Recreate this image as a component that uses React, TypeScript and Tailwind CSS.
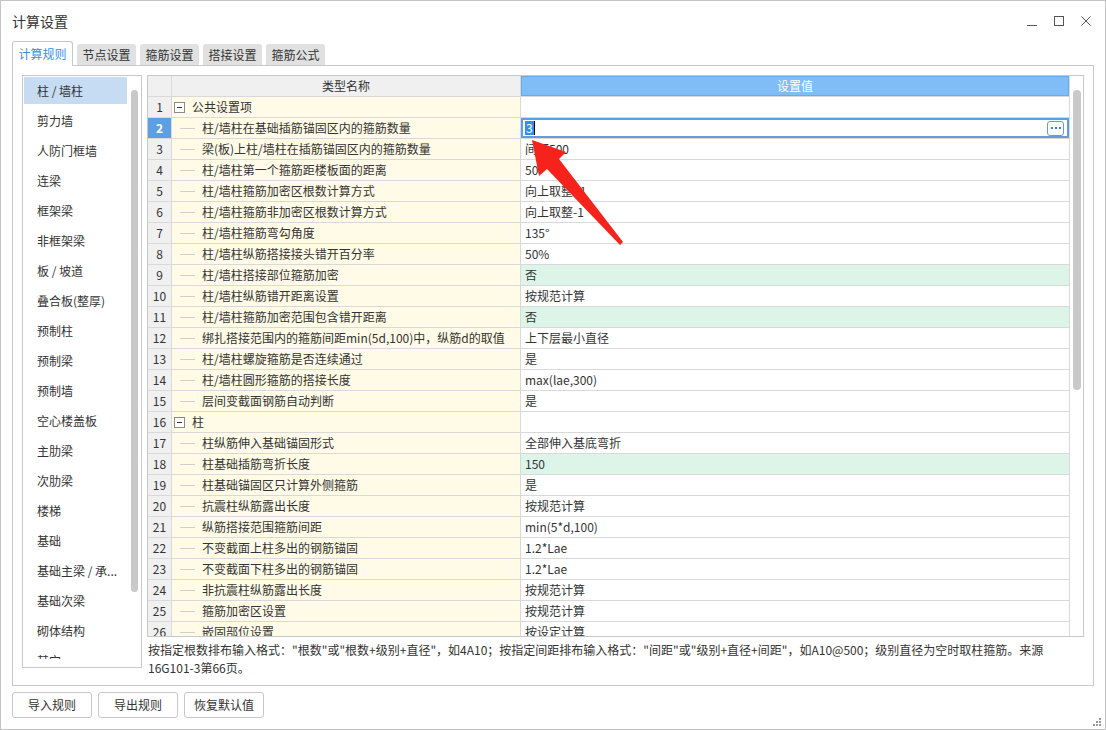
import React from "react";

type Row = {
  n: number;
  name: string;
  value?: string;
  group?: boolean;
  green?: boolean;
  selected?: boolean;
};

const rows: Row[] = [
  { n: 1, name: "公共设置项", group: true },
  { n: 2, name: "柱/墙柱在基础插筋锚固区内的箍筋数量", value: "3", selected: true },
  { n: 3, name: "梁(板)上柱/墙柱在插筋锚固区内的箍筋数量", value: "间距500" },
  { n: 4, name: "柱/墙柱第一个箍筋距楼板面的距离", value: "50" },
  { n: 5, name: "柱/墙柱箍筋加密区根数计算方式", value: "向上取整+1" },
  { n: 6, name: "柱/墙柱箍筋非加密区根数计算方式", value: "向上取整-1" },
  { n: 7, name: "柱/墙柱箍筋弯勾角度", value: "135°" },
  { n: 8, name: "柱/墙柱纵筋搭接接头错开百分率", value: "50%" },
  { n: 9, name: "柱/墙柱搭接部位箍筋加密", value: "否", green: true },
  { n: 10, name: "柱/墙柱纵筋错开距离设置", value: "按规范计算" },
  { n: 11, name: "柱/墙柱箍筋加密范围包含错开距离", value: "否", green: true },
  { n: 12, name: "绑扎搭接范围内的箍筋间距min(5d,100)中，纵筋d的取值", value: "上下层最小直径" },
  { n: 13, name: "柱/墙柱螺旋箍筋是否连续通过", value: "是" },
  { n: 14, name: "柱/墙柱圆形箍筋的搭接长度", value: "max(lae,300)" },
  { n: 15, name: "层间变截面钢筋自动判断", value: "是" },
  { n: 16, name: "柱", group: true },
  { n: 17, name: "柱纵筋伸入基础锚固形式", value: "全部伸入基底弯折" },
  { n: 18, name: "柱基础插筋弯折长度", value: "150", green: true },
  { n: 19, name: "柱基础锚固区只计算外侧箍筋", value: "是" },
  { n: 20, name: "抗震柱纵筋露出长度", value: "按规范计算" },
  { n: 21, name: "纵筋搭接范围箍筋间距", value: "min(5*d,100)" },
  { n: 22, name: "不变截面上柱多出的钢筋锚固", value: "1.2*Lae" },
  { n: 23, name: "不变截面下柱多出的钢筋锚固", value: "1.2*Lae" },
  { n: 24, name: "非抗震柱纵筋露出长度", value: "按规范计算" },
  { n: 25, name: "箍筋加密区设置", value: "按规范计算" },
  { n: 26, name: "嵌固部位设置", value: "按设定计算" },
];

const categories = [
  "柱 / 墙柱",
  "剪力墙",
  "人防门框墙",
  "连梁",
  "框架梁",
  "非框架梁",
  "板 / 坡道",
  "叠合板(整厚)",
  "预制柱",
  "预制梁",
  "预制墙",
  "空心楼盖板",
  "主肋梁",
  "次肋梁",
  "楼梯",
  "基础",
  "基础主梁 / 承...",
  "基础次梁",
  "砌体结构",
  "其它",
];

const tabs = ["计算规则", "节点设置", "箍筋设置", "搭接设置", "箍筋公式"];

const note =
  '按指定根数排布输入格式："根数"或"根数+级别+直径"，如4A10；按指定间距排布输入格式："间距"或"级别+直径+间距"，如A10@500；级别直径为空时取柱箍筋。来源16G101-3第66页。';

function TableRow({ row }: { row: Row }) {
  return (
    <div className="flex h-[21px] border-b border-[#d9d9d9]">
      <div
        className={
          row.selected
            ? "flex w-[24px] shrink-0 items-center justify-center border-r border-[#d9d9d9] bg-[#5d9fe3] font-bold text-white"
            : "flex w-[24px] shrink-0 items-center justify-center border-r border-[#d9d9d9] bg-[#f0f0f0]"
        }
      >
        {row.n}
      </div>
      <div className="flex w-[349px] shrink-0 items-center border-r border-[#d9d9d9] bg-[#fffbe6]">
        {row.group ? (
          <>
            <span className="ml-[2px] flex h-[11px] w-[11px] items-center justify-center border border-[#8a8a8a] bg-white">
              <span className="h-px w-[5px] bg-[#333]" />
            </span>
            <span className="ml-[7px]">{row.name}</span>
          </>
        ) : (
          <>
            <span className="ml-[8px] h-px w-[15px] bg-[#cfcfcf]" />
            <span className="ml-[7px] whitespace-nowrap">{row.name}</span>
          </>
        )}
      </div>
      {row.selected ? (
        <div className="flex flex-1 items-center border-2 border-[#5e9ee0] bg-white pl-[2px] pr-[3px]">
          <span className="bg-[#3390f0] px-px leading-[14px] text-white">{row.value}</span>
          <span className="h-[14px] w-px bg-black" />
          <span className="ml-auto flex h-[15px] w-[17px] items-center justify-center gap-[2px] rounded-[3px] border border-[#5e9ee0]">
            <span className="h-[2px] w-[2px] bg-[#3a80d0]" />
            <span className="h-[2px] w-[2px] bg-[#3a80d0]" />
            <span className="h-[2px] w-[2px] bg-[#3a80d0]" />
          </span>
        </div>
      ) : (
        <div
          className={
            row.green
              ? "flex flex-1 items-center bg-[#ddf4e8] pl-[4px]"
              : "flex flex-1 items-center bg-white pl-[4px]"
          }
        >
          {row.value}
        </div>
      )}
    </div>
  );
}

export default function App() {
  return (
    <div className="relative flex h-[730px] w-[1106px] flex-col overflow-hidden border border-[#c4c4c4] bg-white font-['Noto_Sans_CJK_SC',sans-serif] text-[12px] text-[#333]">
      {/* title bar */}
      <div className="flex h-[39px] shrink-0 items-center pl-[11px]">
        <span className="text-[14px] leading-none text-[#333]">计算设置</span>
        <div className="ml-auto flex items-center gap-[17px] pr-[14px]">
          <span className="flex h-[10px] w-[10px] items-end">
            <span className="h-px w-[10px] bg-[#555]" />
          </span>
          <span className="h-[10px] w-[10px] border border-[#555]" />
          <svg width="10" height="10" viewBox="0 0 10 10" className="text-[#555]">
            <path d="M0.5 0.5 L9.5 9.5 M9.5 0.5 L0.5 9.5" stroke="currentColor" strokeWidth="1" />
          </svg>
        </div>
      </div>

      {/* tabs */}
      <div className="relative z-10 flex h-[25px] shrink-0 items-end gap-[4px] pl-[11px]">
        {tabs.map((t, i) =>
          i === 0 ? (
            <div
              key={t}
              className="-mb-px flex h-[25px] w-[61px] items-center justify-center rounded-t-[3px] border border-b-0 border-[#c8c8c8] bg-white text-[#3a8ee8]"
            >
              {t}
            </div>
          ) : (
            <div
              key={t}
              className="flex h-[21px] w-[59px] items-center justify-center rounded-t-[3px] bg-[#e1e1e1] text-[#333]"
            >
              {t}
            </div>
          )
        )}
      </div>

      {/* content panel */}
      <div className="ml-[11px] flex h-[621px] w-[1082px] shrink-0 gap-[5px] border border-[#c8c8c8] pl-[9px] pt-[9px]">
        {/* category list */}
        <div className="flex h-[593px] w-[120px] shrink-0 items-start overflow-hidden border border-[#c8c8c8]">
          <div className="h-[583px] flex-1 overflow-hidden pl-px pt-px">
            {categories.map((c, i) => (
              <div
                key={c}
                className={
                  i === 0
                    ? "mb-[3px] flex h-[27px] w-[103px] items-center whitespace-nowrap bg-[#c5dcf2] pl-[13px]"
                    : "mb-[3px] flex h-[27px] w-[103px] items-center whitespace-nowrap pl-[13px]"
                }
              >
                {c}
              </div>
            ))}
          </div>
          <div className="w-[10px] shrink-0">
            <div className="mt-[14px] h-[502px] w-[7px] rounded-full bg-[#c9c9c9]" />
          </div>
        </div>

        {/* table + note */}
        <div className="flex w-[937px] flex-col">
          <div className="flex h-[562px] overflow-hidden border border-[#c8c8c8]">
            <div className="flex-1 overflow-hidden">
              <div className="flex h-[21px] border-b border-[#d9d9d9]">
                <div className="w-[24px] shrink-0 border-r border-[#d9d9d9] bg-[#f0f0f0]" />
                <div className="flex w-[349px] shrink-0 items-center justify-center border-r border-[#d9d9d9] bg-[#f0f0f0]">
                  类型名称
                </div>
                <div className="flex flex-1 items-center justify-center border border-[#6aa9ea] bg-[#80bcf6] text-white">
                  设置值
                </div>
              </div>
              {rows.map((r) => (
                <TableRow key={r.n} row={r} />
              ))}
            </div>
            <div className="w-[14px] shrink-0 border-l border-[#d9d9d9] bg-white">
              <div className="ml-[3px] mt-[14px] h-[300px] w-[8px] rounded-full bg-[#c9c9c9]" />
            </div>
          </div>
          <p className="mt-[4px] pl-px leading-[18px] text-[#333]">{note}</p>
        </div>
      </div>

      {/* buttons */}
      <div className="mt-[6px] flex gap-[6px] pl-[11px]">
        {["导入规则", "导出规则", "恢复默认值"].map((b) => (
          <button
            key={b}
            type="button"
            className="flex h-[26px] w-[80px] items-center justify-center rounded-[3px] border border-[#c8c8c8] bg-white text-[12px] text-[#333]"
          >
            {b}
          </button>
        ))}
      </div>

      {/* resize grip */}
      <svg className="absolute bottom-[3px] right-[4px]" width="8" height="8" viewBox="0 0 8 8">
        <rect x="6" y="0" width="2" height="2" fill="#9a9a9a" />
        <rect x="3" y="3" width="2" height="2" fill="#9a9a9a" />
        <rect x="6" y="3" width="2" height="2" fill="#9a9a9a" />
        <rect x="0" y="6" width="2" height="2" fill="#9a9a9a" />
        <rect x="3" y="6" width="2" height="2" fill="#9a9a9a" />
        <rect x="6" y="6" width="2" height="2" fill="#9a9a9a" />
      </svg>

      {/* red annotation arrow */}
      <svg className="pointer-events-none absolute left-0 top-0" width="1106" height="730">
        <polygon
          points="531,139 565,151 558,158 622,241 619,244 546,168 538,175"
          fill="#f5231c"
        />
      </svg>
    </div>
  );
}
